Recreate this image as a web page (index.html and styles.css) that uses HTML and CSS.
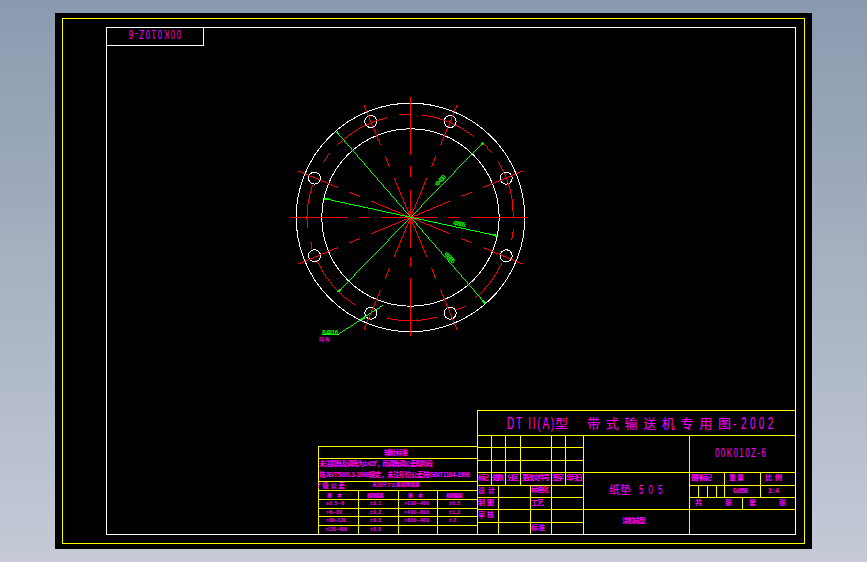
FILE: index.html
```html
<!DOCTYPE html>
<html lang="zh">
<head>
<meta charset="utf-8">
<title>DT II(A) 纸垫 505</title>
<link rel="stylesheet" href="styles.css">
</head>
<body>
<main class="sheet">
<svg class="drawing" viewBox="55 13 757 536" xmlns="http://www.w3.org/2000/svg">
  <defs>
    <path id="dia" d="M0 -122V-78M0 -67V-55M0 -43V43M0 55V67M0 78V122"/>
  </defs>

  <!-- frames -->
  <rect class="yellow" x="62.5" y="18.5" width="742" height="525"/>
  <rect class="white" x="106.5" y="27.5" width="689" height="507"/>
  <path class="white" d="M106.5 45.5H203.5V27.5"/>
  <text class="mg code-flip" transform="translate(155 30) rotate(180) scale(.62 1)" text-anchor="middle" textLength="84">00K010Z-6</text>

  <!-- part view -->
  <g transform="translate(410.5 217.5)">
    <circle class="white" r="114.3"/>
    <circle class="white" r="88.7"/>
    <circle class="white" cx="-39.7" cy="-96" r="6"/>
    <circle class="white" cx="39.7" cy="-96" r="6"/>
    <circle class="white" cx="95.7" cy="-39.3" r="6"/>
    <circle class="white" cx="95.7" cy="38.3" r="6"/>
    <circle class="white" cx="39.7" cy="95.7" r="6"/>
    <circle class="white" cx="-39.7" cy="95.7" r="6"/>
    <circle class="white" cx="-96" cy="38.3" r="6"/>
    <circle class="white" cx="-96" cy="-39.3" r="6"/>
    <g class="red">
      <use href="#dia" transform="rotate(22.5)"/>
      <use href="#dia" transform="rotate(67.5)"/>
      <use href="#dia" transform="rotate(112.5)"/>
      <use href="#dia" transform="rotate(157.5)"/>
    </g>
  </g>
  <g transform="translate(280 90) scale(.33333)">
    <path class="red wide" d="M30 382H205M238 382H270M303 382H470M505 382H540M573 382H745M392 21V195M392 228V260M392 300V474M392 500V530M392 564V737"/>
    <path class="red wide" d="M358 75A310 310 0 0 1 390 72M427 75A310 310 0 0 1 582 140M610 160A310 310 0 0 1 635 190M655 215A310 310 0 0 1 700 382M700 420A310 310 0 0 1 695 450M665 520A310 310 0 0 1 585 625M555 650A310 310 0 0 1 525 660M470 682A310 310 0 0 1 322 685M225 645A310 310 0 0 1 110 510M97 478A310 310 0 0 1 92 455M82 415A310 310 0 0 1 98 285M130 217A310 310 0 0 1 148 190M172 165A310 310 0 0 1 322 83"/>
    <path class="green wide" d="M172 128L612 636M607 160L177 603M133 326L650 437M308 646L175 733H127"/>
    <path class="green heavy" d="M170 126L177 134M607 631L615 640M604 164L610 158M174 606L182 597M133 326L149 329M640 435L652 438M245 688L255 681"/>
  </g>
  <text class="gr dim" transform="translate(442 182) rotate(-47)" text-anchor="middle" textLength="13">Φ430</text>
  <text class="gr dim" transform="translate(459 226) rotate(12)" text-anchor="middle" textLength="13">Φ505</text>
  <text class="gr dim" transform="translate(448 259) rotate(48)" text-anchor="middle" textLength="13">Φ385</text>
  <text class="gr dim" x="322" y="335" textLength="16">8-Φ16</text>
  <text class="mg tiny" x="319" y="341" textLength="11">均布</text>

  <!-- small table -->
  <path class="yellow" d="M318.5 534V446.5H477.5M318.5 458.5H477.5M318.5 481.5H477.5M318.5 490.5H477.5M318.5 499.5H477.5M318.5 508.5H477.5M318.5 516.5H477.5M318.5 525.5H477.5M358.5 490.5V534M398.5 490.5V534M437.5 490.5V534"/>
  <text class="mg note" x="384" y="455" textLength="24">辅助标准</text>
  <text class="mg note" x="319" y="466" textLength="114">未注圆角及调角为1×0.5°，而调角调公差取阶段</text>
  <text class="mg note" x="319" y="477" textLength="151">按JB/T5000.3-1998规定，未注形位公差按GB/T1184-1996</text>
  <text class="mg note" x="317" y="488" textLength="28">7级公差</text>
  <text class="mg tiny" x="372" y="486" textLength="48">未注尺寸公差极限偏差</text>
  <text class="mg tiny" x="327" y="496.5" textLength="15">基 本</text>
  <text class="mg tiny" x="367" y="496.5" textLength="17">极限偏差</text>
  <text class="mg tiny" x="408" y="496.5" textLength="15">基 本</text>
  <text class="mg tiny" x="446" y="496.5" textLength="17">极限偏差</text>
  <text class="mg tiny" x="326" y="504.5" textLength="18">≥0.5~6</text>
  <text class="mg tiny" x="370" y="504.5" textLength="11">±0.1</text>
  <text class="mg tiny" x="404" y="504.5" textLength="25">&gt;100~400</text>
  <text class="mg tiny" x="449" y="504.5" textLength="11">±0.5</text>
  <text class="mg tiny" x="326" y="513.5" textLength="16">&gt;6~30</text>
  <text class="mg tiny" x="370" y="513.5" textLength="11">±0.2</text>
  <text class="mg tiny" x="404" y="513.5" textLength="25">&gt;400~800</text>
  <text class="mg tiny" x="449" y="513.5" textLength="11">±1.2</text>
  <text class="mg tiny" x="326" y="522" textLength="20">&gt;30~120</text>
  <text class="mg tiny" x="370" y="522" textLength="11">±0.3</text>
  <text class="mg tiny" x="404" y="522" textLength="25">&gt;800~400</text>
  <text class="mg tiny" x="449" y="522" textLength="7">±2</text>
  <text class="mg tiny" x="325" y="531" textLength="22">&gt;120~400</text>
  <text class="mg tiny" x="370" y="531" textLength="11">±0.5</text>

  <!-- title block -->
  <path class="yellow" d="M477.5 534V410.5H795M477.5 435.5H795M477.5 447.5H583.5M477.5 460.5H583.5M477.5 472.5H795M477.5 485.5H583.5M477.5 497.5H583.5M477.5 509.5H795M477.5 522.5H583.5M491.5 435.5V485.5M505.5 435.5V485.5M520.5 435.5V485.5M551.5 435.5V534M565.5 435.5V485.5M583.5 435.5V534M498.5 485.5V534M530.5 485.5V534M689.5 435.5V534M689.5 485.5H795M689.5 497.5H795M724.5 472.5V497.5M760.5 472.5V497.5M698.5 485.5V497.5M707.5 485.5V497.5M716.5 485.5V497.5M742.5 497.5V509.5"/>
  <text class="mg title-latin" transform="translate(507 428.5) scale(.62 1)" textLength="76">DT II(A)</text>
  <text class="mg title-cjk" x="555" y="428" textLength="11">型</text>
  <text class="mg title-cjk" x="587" y="428" textLength="144">带式输送机专用图</text>
  <text class="mg title-latin" transform="translate(733 428.5) scale(.62 1)" textLength="7">-</text>
  <text class="mg title-latin" transform="translate(741 428.5) scale(.62 1)" textLength="52">2002</text>
  <text class="mg code" transform="translate(715 457) scale(.62 1)" textLength="82">00K010Z-6</text>
  <text class="mg name-cjk" x="609" y="494" textLength="22">纸垫</text>
  <text class="mg code" transform="translate(639 494) scale(.62 1)" textLength="38">505</text>
  <text class="mg label" x="622" y="523" textLength="24">涂胶成型</text>
  <text class="mg label" x="478" y="480" textLength="11">标记</text>
  <text class="mg label" x="492" y="480" textLength="12">处数</text>
  <text class="mg label" x="507" y="480" textLength="12">分区</text>
  <text class="mg label" x="522" y="480" textLength="28">更改文件号</text>
  <text class="mg label" x="552" y="480" textLength="12">签字</text>
  <text class="mg label" x="566" y="480" textLength="17">年月日</text>
  <text class="mg label" x="478" y="493" textLength="17">设 计</text>
  <text class="mg label" x="478" y="505" textLength="16">制 图</text>
  <text class="mg label" x="478" y="517" textLength="16">审 核</text>
  <text class="mg label" x="531" y="492" textLength="18">标准化</text>
  <text class="mg label" x="531" y="505" textLength="13">工 艺</text>
  <text class="mg label" x="531" y="530" textLength="14">标 准</text>
  <text class="mg label" x="691" y="480" textLength="21">图样标记</text>
  <text class="mg label" x="729" y="480" textLength="15">重 量</text>
  <text class="mg label" x="765" y="480" textLength="17">比 例</text>
  <text class="mg label" x="733" y="493" textLength="15">0.058</text>
  <text class="mg label" x="768" y="493" textLength="11">1:4</text>
  <text class="mg label" x="695" y="505" textLength="6">共</text>
  <text class="mg label" x="725" y="505" textLength="6">张</text>
  <text class="mg label" x="749" y="505" textLength="6">第</text>
  <text class="mg label" x="779" y="505" textLength="6">张</text>
</svg>
</main>
</body>
</html>
```

FILE: styles.css
```css
html, body {
  margin: 0;
  height: 100%;
}

body {
  background: linear-gradient(180deg, #8a9aae 0%, #c5cad6 100%);
  overflow: hidden;
}

.sheet {
  width: 757px;
  height: 536px;
  margin-left: 55px;
  padding-top: 13px;
}

.drawing {
  display: block;
  width: 757px;
  height: 536px;
  background: #000;
}

.yellow, .white, .red, .green {
  fill: none;
  shape-rendering: crispEdges;
}

.yellow { stroke: #ffff00; stroke-width: 1; }
.white { stroke: #ffffff; stroke-width: 1; }
.red { stroke: #ff0000; stroke-width: 1; }
.red.wide { stroke-width: 3; }
.green.wide { stroke: #00ff00; stroke-width: 3; }
.green.heavy { stroke: #00ff00; stroke-width: 6; }

text {
  font-family: "Liberation Sans", "Noto Sans CJK SC", sans-serif;
}

.mg { fill: #ff00ff; }
.gr { fill: #00ff00; }

.code-flip { font-size: 12.5px; }
.title-latin { font-size: 16px; }
.title-cjk { font-size: 13px; }
.code { font-size: 13px; }
.name-cjk { font-size: 11px; }
.label { font-size: 7px; font-weight: 700; }
.note { font-size: 6.5px; font-weight: 700; }
.tiny { font-size: 5px; font-weight: 700; }
.dim { font-size: 6.5px; font-weight: 700; }
```
